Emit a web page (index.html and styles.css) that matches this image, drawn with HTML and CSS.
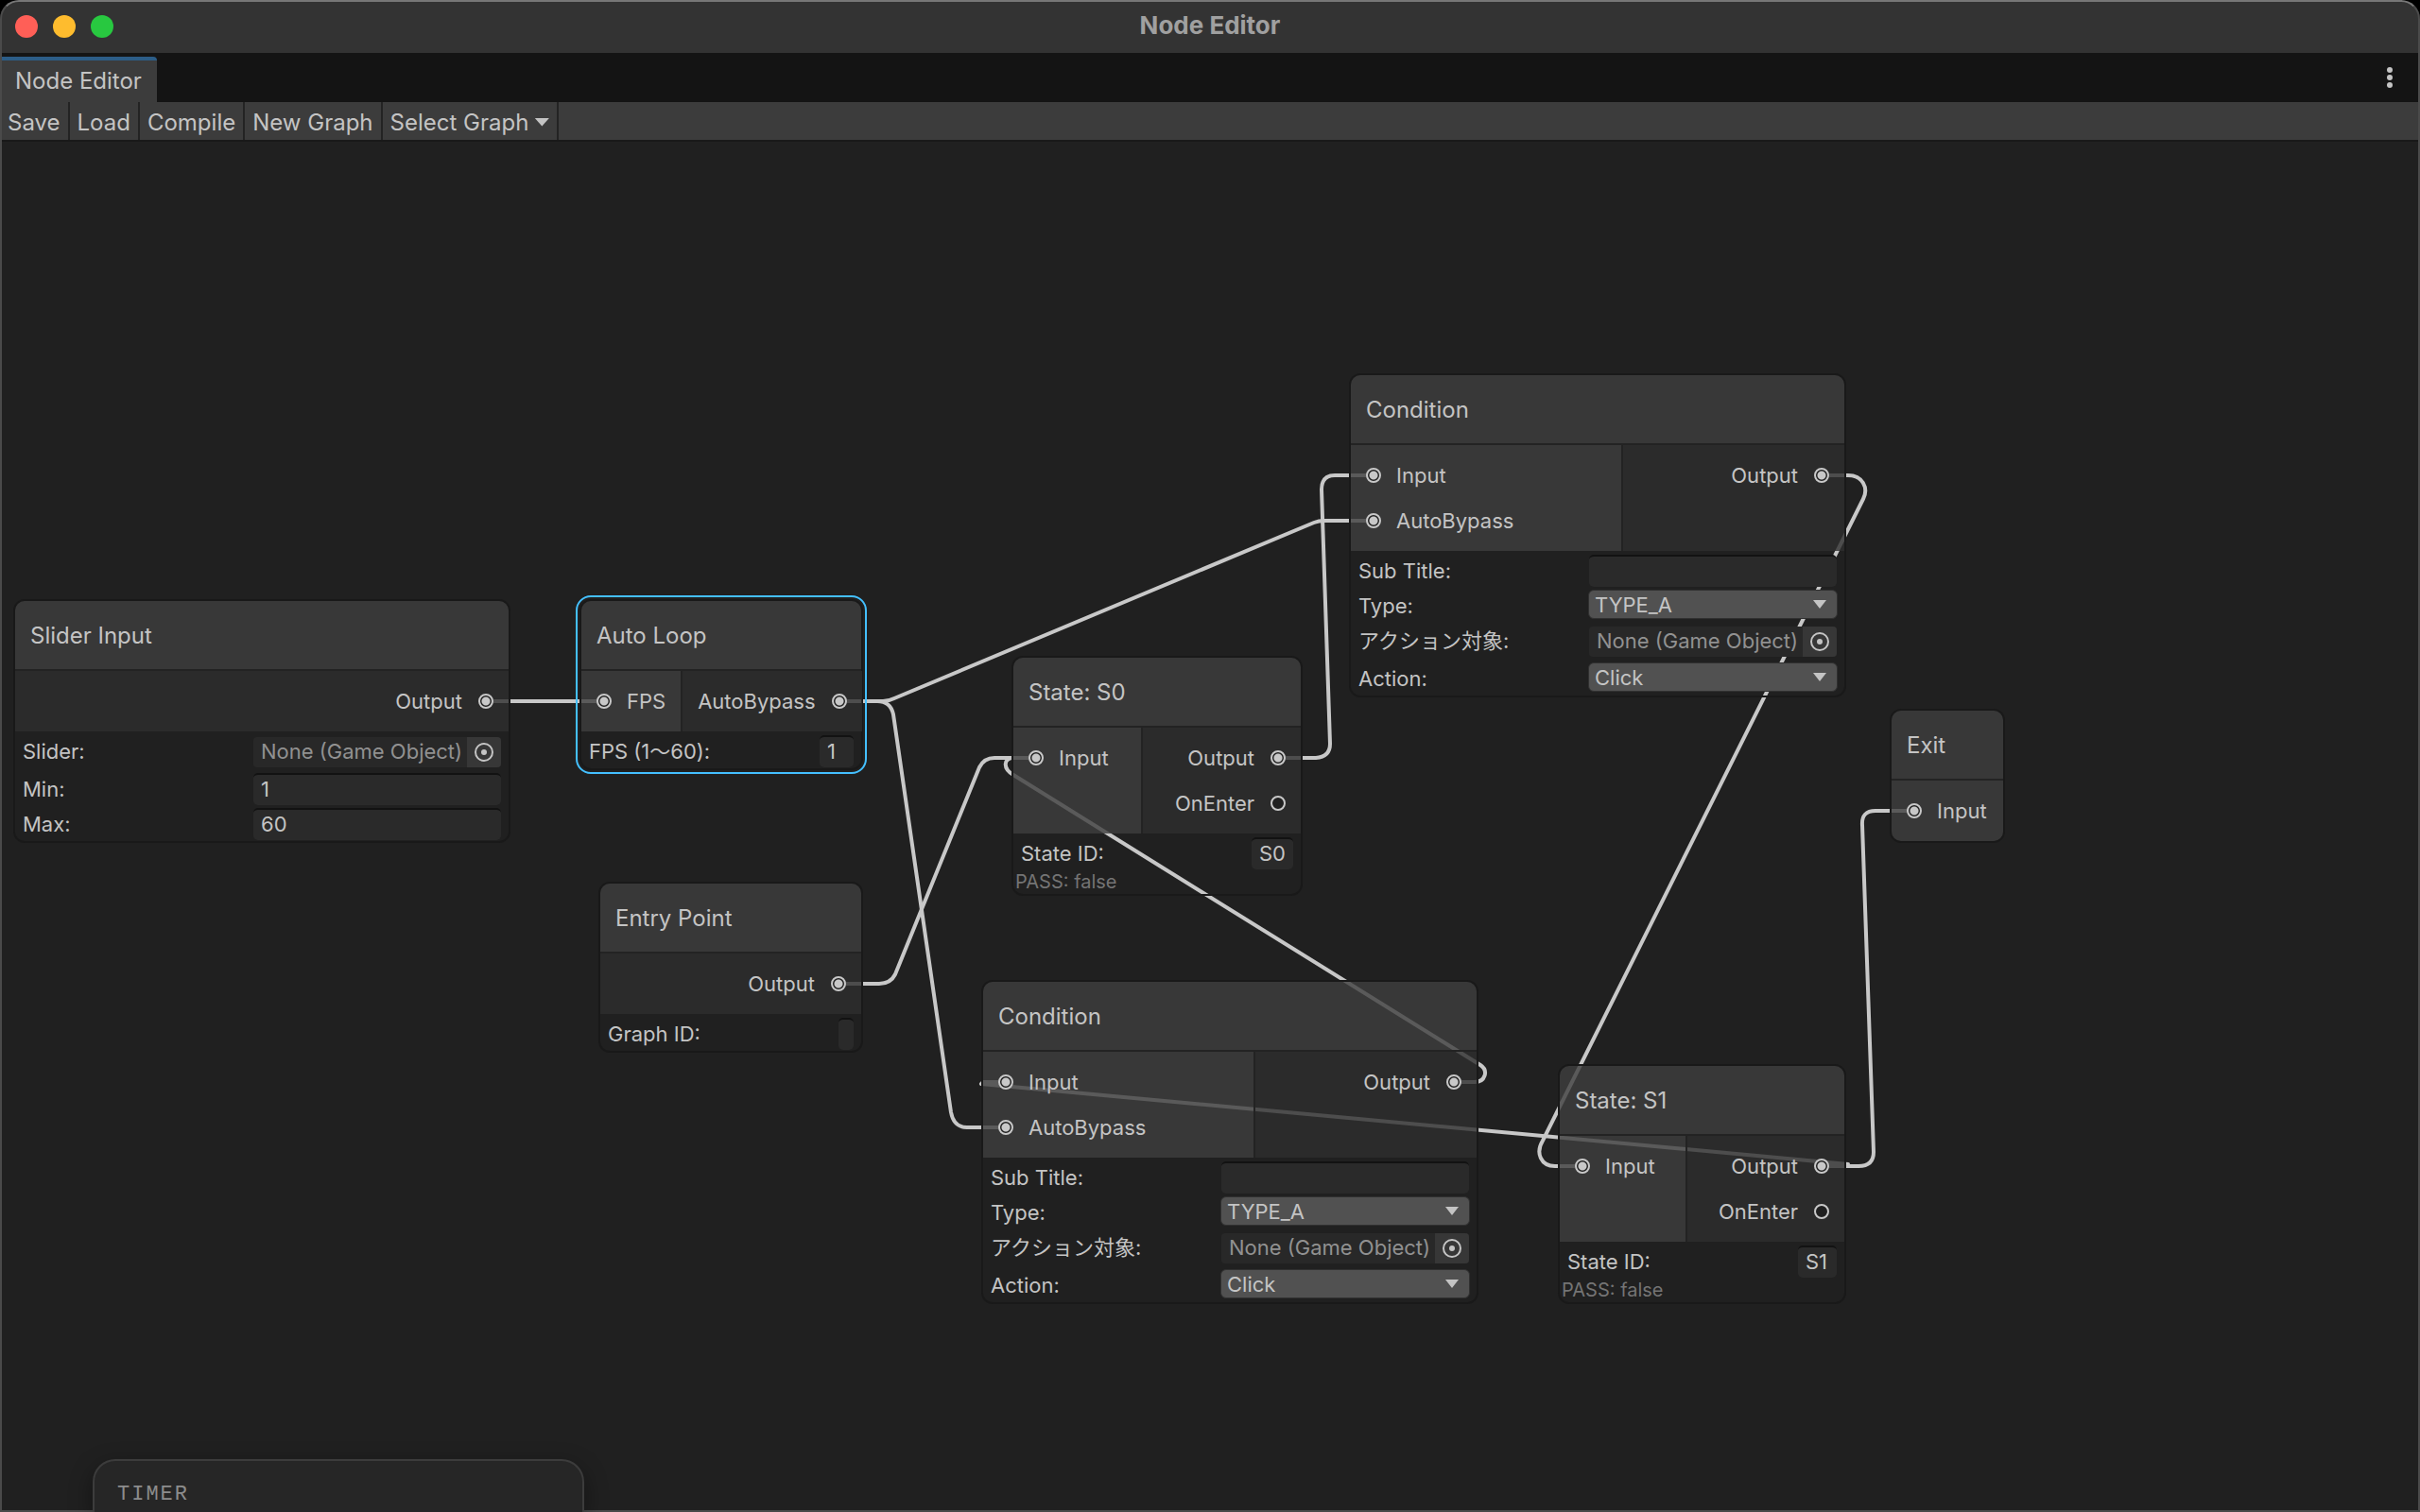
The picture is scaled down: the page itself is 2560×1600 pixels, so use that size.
FILE: index.html
```html
<!DOCTYPE html>
<html lang="ja">
<head>
  <meta charset="UTF-8">
  <meta name="viewport" content="width=device-width, initial-scale=1">
  <title>Node Editor</title>
  <link rel="stylesheet" href="styles.css">
</head>
<body>
  <div class="window">
    <!-- タイトルバー -->
    <header class="titlebar">
      <div class="lights">
        <button class="light close" aria-label="Close"></button>
        <button class="light minimize" aria-label="Minimize"></button>
        <button class="light zoom" aria-label="Zoom"></button>
      </div>
      <h1>Node Editor</h1>
    </header>

    <!-- タブ -->
    <div class="tabs">
      <button class="tab">Node Editor</button>
      <button class="more" aria-label="Menu">
        <svg width="8" height="24" viewBox="0 0 8 24">
          <circle cx="4" cy="4" r="3"/><circle cx="4" cy="12" r="3"/><circle cx="4" cy="20" r="3"/>
        </svg>
      </button>
    </div>

    <!-- ツールバー -->
    <nav class="toolbar">
      <button>Save</button>
      <button>Load</button>
      <button>Compile</button>
      <button>New Graph</button>
      <button>Select Graph<span class="caret"></span></button>
    </nav>

    <!-- グラフ -->
    <main class="graph">
      <svg class="edges" aria-hidden="true">
        <g transform="translate(0 -148)">
          <path d="M514 742H639"/>
          <path d="M887 742H934Q940 742 946 739L1390 553Q1395 551 1401 551H1453"/>
          <path d="M887 742H928Q942 742 945 756L1006 1177Q1009 1193 1023 1193H1064"/>
          <path d="M887 1041H930Q942 1041 947 1031L1036 812Q1041 802 1052 802H1096"/>
          <path d="M1352 802H1392Q1407 801 1407 787L1398 518Q1398 503 1412 503H1453"/>
          <path d="M1927 503H1955C1970 503 1977 516 1971 528L1632 1207C1624 1220 1630 1234 1645 1234H1674"/>
          <path d="M1927 1234H1966Q1982 1234 1982 1219L1970 873Q1969 858 1984 858H2025"/>
          <path d="M1538 1145H1560C1571 1145 1575 1133 1566 1127L1072 820C1060 813 1062 802 1072 802H1096"/>
          <path d="M1064 1145H1040L1038 1147L1955 1232L1953 1234H1927"/>
        </g>
      </svg>

      <!-- Slider Input -->
      <section class="node slider-input">
        <h2>Slider Input</h2>
        <div class="ports">
          <ul class="outputs">
            <li>Output<i class="port on"></i></li>
          </ul>
        </div>
        <div class="fields">
          <div class="row object">
            <label for="slider">Slider:</label>
            <div class="picker">
              <input id="slider" type="text" value="None (Game Object)" readonly>
              <button aria-label="Select object"><svg width="22" height="22" viewBox="0 0 22 22"><circle class="ring" cx="11" cy="11" r="9"/><circle cx="11" cy="11" r="3"/></svg></button>
            </div>
          </div>
          <div class="row">
            <label for="min">Min:</label>
            <input id="min" class="text" type="text" value="1">
          </div>
          <div class="row">
            <label for="max">Max:</label>
            <input id="max" class="text" type="text" value="60">
          </div>
        </div>
      </section>

      <!-- Auto Loop（選択中） -->
      <section class="node auto-loop selected">
        <h2>Auto Loop</h2>
        <div class="ports">
          <ul class="inputs">
            <li><i class="port on"></i>FPS</li>
          </ul>
          <ul class="outputs">
            <li>AutoBypass<i class="port on"></i></li>
          </ul>
        </div>
        <div class="fields compact">
          <div class="row">
            <label for="fps">FPS (1〜60):</label>
            <input id="fps" class="text w-number" type="text" value="1">
          </div>
        </div>
      </section>

      <!-- Entry Point -->
      <section class="node entry-point">
        <h2>Entry Point</h2>
        <div class="ports">
          <ul class="outputs">
            <li>Output<i class="port on"></i></li>
          </ul>
        </div>
        <div class="fields compact">
          <div class="row">
            <label for="graph-id">Graph ID:</label>
            <input id="graph-id" class="text w-empty" type="text">
          </div>
        </div>
      </section>

      <!-- State: S0 -->
      <section class="node state-s0">
        <h2>State: S0</h2>
        <div class="ports">
          <ul class="inputs">
            <li><i class="port on"></i>Input</li>
          </ul>
          <ul class="outputs">
            <li>Output<i class="port on"></i></li>
            <li>OnEnter<i class="port"></i></li>
          </ul>
        </div>
        <div class="fields compact">
          <div class="row">
            <label for="state-0">State ID:</label>
            <input id="state-0" class="text w-id" type="text" value="S0">
          </div>
        </div>
        <p class="status">PASS: false</p>
      </section>

      <!-- Condition（上） -->
      <section class="node condition-1">
        <h2>Condition</h2>
        <div class="ports">
          <ul class="inputs">
            <li><i class="port on"></i>Input</li>
            <li><i class="port on"></i>AutoBypass</li>
          </ul>
          <ul class="outputs">
            <li>Output<i class="port on"></i></li>
          </ul>
        </div>
        <div class="fields">
          <div class="row">
            <label for="sub-1">Sub Title:</label>
            <input id="sub-1" class="text" type="text">
          </div>
          <div class="row">
            <label for="type-1">Type:</label>
            <div class="dropdown"><select id="type-1"><option>TYPE_A</option></select></div>
          </div>
          <div class="row object">
            <label for="target-1">アクション対象:</label>
            <div class="picker">
              <input id="target-1" type="text" value="None (Game Object)" readonly>
              <button aria-label="Select object"><svg width="22" height="22" viewBox="0 0 22 22"><circle class="ring" cx="11" cy="11" r="9"/><circle cx="11" cy="11" r="3"/></svg></button>
            </div>
          </div>
          <div class="row">
            <label for="action-1">Action:</label>
            <div class="dropdown"><select id="action-1"><option>Click</option></select></div>
          </div>
        </div>
      </section>

      <!-- Condition（下） -->
      <section class="node condition-2">
        <h2>Condition</h2>
        <div class="ports">
          <ul class="inputs">
            <li><i class="port on"></i>Input</li>
            <li><i class="port on"></i>AutoBypass</li>
          </ul>
          <ul class="outputs">
            <li>Output<i class="port on"></i></li>
          </ul>
        </div>
        <div class="fields">
          <div class="row">
            <label for="sub-2">Sub Title:</label>
            <input id="sub-2" class="text" type="text">
          </div>
          <div class="row">
            <label for="type-2">Type:</label>
            <div class="dropdown"><select id="type-2"><option>TYPE_A</option></select></div>
          </div>
          <div class="row object">
            <label for="target-2">アクション対象:</label>
            <div class="picker">
              <input id="target-2" type="text" value="None (Game Object)" readonly>
              <button aria-label="Select object"><svg width="22" height="22" viewBox="0 0 22 22"><circle class="ring" cx="11" cy="11" r="9"/><circle cx="11" cy="11" r="3"/></svg></button>
            </div>
          </div>
          <div class="row">
            <label for="action-2">Action:</label>
            <div class="dropdown"><select id="action-2"><option>Click</option></select></div>
          </div>
        </div>
      </section>

      <!-- State: S1 -->
      <section class="node state-s1">
        <h2>State: S1</h2>
        <div class="ports">
          <ul class="inputs">
            <li><i class="port on"></i>Input</li>
          </ul>
          <ul class="outputs">
            <li>Output<i class="port on"></i></li>
            <li>OnEnter<i class="port"></i></li>
          </ul>
        </div>
        <div class="fields compact">
          <div class="row">
            <label for="state-1">State ID:</label>
            <input id="state-1" class="text w-id-narrow" type="text" value="S1">
          </div>
        </div>
        <p class="status">PASS: false</p>
      </section>

      <!-- Exit -->
      <section class="node exit">
        <h2>Exit</h2>
        <div class="ports">
          <ul class="inputs">
            <li><i class="port on"></i>Input</li>
          </ul>
        </div>
      </section>
    </main>

    <!-- タイマー -->
    <aside class="timer">TIMER</aside>
  </div>
</body>
</html>
```
FILE: styles.css
```css
:root {
  --bg: #202020;
  --bar: #3c3c3c;
  --text: #c4c4c4;
  --edge: #c8c8c8;
  --line: #191919;
  --field: #2a2a2a;
  --input-bg: rgba(63, 63, 63, 0.8);
  --output-bg: rgba(46, 46, 46, 0.8);
  --select: #44c0ff;
}
*, *::before, *::after { box-sizing: border-box; }
body {
  margin: 0;
  background: #000;
  color: var(--text);
  font-family: Inter, "Noto Sans CJK JP", sans-serif;
  font-size: 22px;
}
h1, h2, p, ul { margin: 0; padding: 0; }
ul { list-style: none; }
button, input, select {
  margin: 0;
  padding: 0;
  border: none;
  outline: none;
  background: none;
  color: inherit;
  font: inherit;
}

.window {
  position: relative;
  display: flex;
  flex-direction: column;
  height: 100vh;
  overflow: hidden;
  border-radius: 20px 20px 0 0;
  background: var(--bg);
}
/* ウィンドウの枠線 */
.window::after {
  content: '';
  position: absolute;
  inset: 0;
  border: 2px solid #4a4a4a;
  border-top-color: #777;
  border-radius: 20px 20px 0 0;
  pointer-events: none;
}

/* タイトルバー */
.titlebar {
  display: grid;
  grid-template-columns: 1fr auto 1fr;
  align-items: center;
  height: 56px;
  padding: 0 16px;
  background: #333;
}
.titlebar h1 {
  padding-bottom: 2px;
  color: #a0a0a0;
  font-size: 26px;
  font-weight: 700;
  line-height: 32px;
}
.lights { display: flex; gap: 16px; }
.light { width: 24px; height: 24px; border-radius: 50%; }
.close { background: #ff5f57; }
.minimize { background: #febc2e; }
.zoom { background: #28c840; }

/* タブ */
.tabs {
  display: flex;
  justify-content: space-between;
  align-items: flex-end;
  height: 52px;
  background: #141414;
}
.tab {
  height: 48px;
  padding: 0 16px 2px;
  border-top: 4px solid #2c5d87;
  border-radius: 0 4px 0 0;
  background: var(--bar);
  font-size: 24px;
}
.more {
  display: flex;
  align-items: center;
  height: 52px;
  padding: 0 28px;
}
.more svg { fill: var(--text); }

/* ツールバー */
.toolbar {
  display: flex;
  height: 40px;
  background: var(--bar);
}
.toolbar button {
  display: flex;
  align-items: center;
  gap: 6px;
  padding: 2px 8px 0;
  border-right: 2px solid #232323;
  font-size: 24px;
}
.caret {
  width: 16px;
  height: 9px;
  background: var(--text);
  clip-path: polygon(0 0, 100% 0, 50% 100%);
}

/* グラフ */
.graph {
  position: relative;
  flex: 1;
  overflow: hidden;
  border-top: 2px solid var(--line);
}
.edges {
  position: absolute;
  top: -2px;
  left: 0;
  width: 100%;
  height: 100%;
  overflow: visible;
}
.edges path {
  fill: none;
  stroke: var(--edge);
  stroke-width: 4;
  stroke-linejoin: round;
}

/* ノード */
.node {
  position: absolute;
  border: 2px solid var(--line);
  border-radius: 12px;
}
.slider-input { left: 14px; top: 484px; width: 526px; }
.auto-loop { left: 613px; top: 484px; width: 300px; }
.entry-point { left: 633px; top: 783px; width: 280px; }
.state-s0 { left: 1070px; top: 544px; width: 308px; }
.condition-1 { left: 1427px; top: 245px; width: 526px; }
.condition-2 { left: 1038px; top: 887px; width: 526px; }
.state-s1 { left: 1648px; top: 976px; width: 305px; }
.exit { left: 1999px; top: 600px; width: 122px; }
.selected::after {
  content: '';
  position: absolute;
  inset: -6px;
  border: 2px solid var(--select);
  border-radius: 16px;
  pointer-events: none;
}
.node h2 {
  height: 72px;
  padding: 0 16px;
  border-radius: 10px 10px 0 0;
  background: var(--input-bg);
  font-size: 24px;
  font-weight: 400;
  line-height: 74px;
}

/* ポート */
.ports {
  display: flex;
  border-top: 2px solid #232323;
}
.inputs, .outputs { flex: 1 1 auto; padding: 8px 16px; }
.inputs { background: var(--input-bg); }
.outputs { background: var(--output-bg); }
.inputs + .outputs { border-left: 2px solid #232323; }
.exit .inputs { border-radius: 0 0 10px 10px; }
.ports li {
  display: flex;
  align-items: center;
  gap: 16px;
  height: 48px;
}
.outputs li { justify-content: flex-end; gap: 17px; }
.port {
  width: 16px;
  height: 16px;
  border: 2px solid var(--edge);
  border-radius: 50%;
  background: var(--bg);
}
.port.on { background: radial-gradient(circle, var(--edge) 4px, var(--bg) 5px); }

/* 入力欄 */
.fields {
  display: grid;
  gap: 6px;
  padding: 4px 8px;
}
.row {
  display: grid;
  grid-template-columns: 244px 1fr;
  height: 31px;
}
.compact .row { grid-template-columns: 1fr auto; }
.row label { line-height: 34px; white-space: nowrap; }
.text {
  width: 100%;
  padding: 0 8px 2px;
  border-top: 2px solid #121212;
  border-radius: 5px;
  background: var(--field);
}
.w-number { width: 36px; }
.w-empty { width: 16px; }
.w-id { width: 44px; }
.w-id-narrow { width: 41px; }
.object { height: 32px; margin-top: 2px; }
.object label { line-height: 30px; }
.picker {
  display: flex;
  overflow: hidden;
  border-radius: 4px;
  background: #282828;
}
.picker input {
  flex: 1;
  min-width: 0;
  padding: 0 0 2px 8px;
  color: #919191;
}
.picker button {
  display: flex;
  justify-content: center;
  align-items: center;
  width: 36px;
  background: #373737;
}
.picker svg { fill: var(--text); }
.picker .ring { fill: none; stroke: var(--text); stroke-width: 2; }
.dropdown { position: relative; margin: 0 -1px; }
.dropdown select {
  display: block;
  width: 100%;
  height: 31px;
  padding: 0 6px;
  border: 1px solid #303030;
  border-radius: 6px;
  background: #515151;
  appearance: none;
}
.dropdown::after {
  content: '';
  position: absolute;
  top: 11px;
  right: 12px;
  width: 14px;
  height: 9px;
  background: var(--text);
  clip-path: polygon(0 0, 100% 0, 50% 100%);
  pointer-events: none;
}
.status {
  padding-left: 2px;
  color: #747474;
  font-size: 20px;
  line-height: 25px;
}

/* タイマー */
.timer {
  position: absolute;
  z-index: 1;
  left: 98px;
  bottom: 0;
  width: 520px;
  height: 56px;
  padding: 24px;
  border: 2px solid #3c3c3c;
  border-bottom: none;
  border-radius: 24px 24px 0 0;
  background: #262626;
  box-shadow: 0 8px 24px rgba(0, 0, 0, 0.4);
  color: #8c8c8c;
  font-family: "Liberation Mono", monospace;
  font-size: 22px;
  line-height: 24px;
  letter-spacing: 2px;
}
```
